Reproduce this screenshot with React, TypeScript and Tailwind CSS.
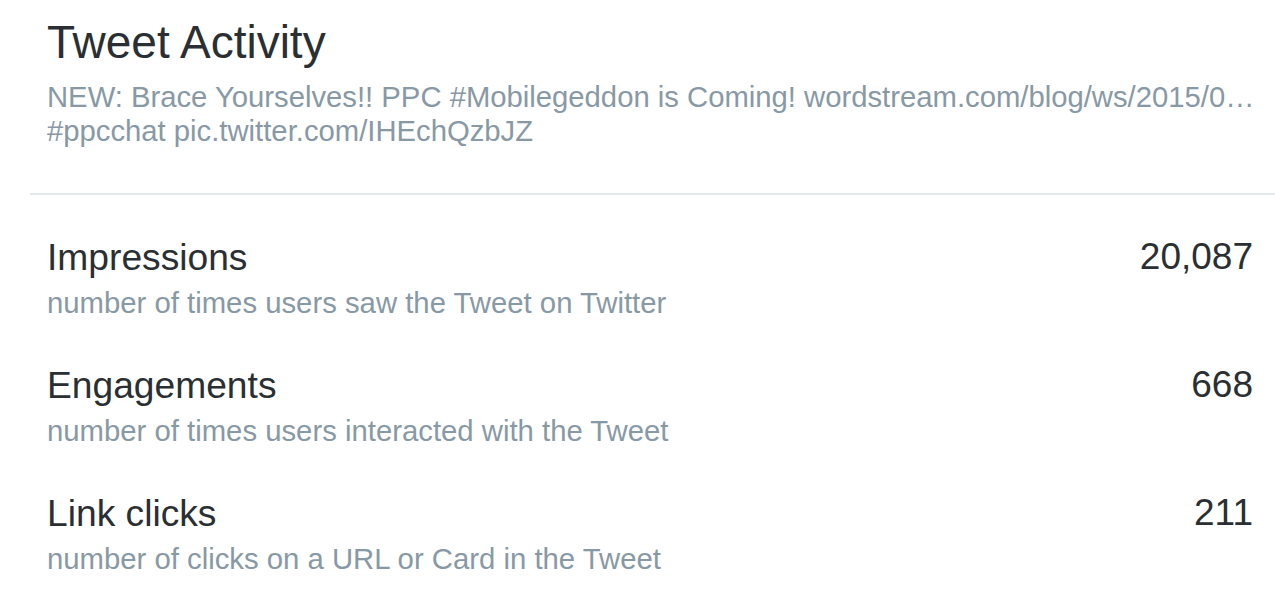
import React from "react";

const rows = [
  { label: "Impressions", desc: "number of times users saw the Tweet on Twitter", value: "20,087" },
  { label: "Engagements", desc: "number of times users interacted with the Tweet", value: "668" },
  { label: "Link clicks", desc: "number of clicks on a URL or Card in the Tweet", value: "211" },
];

export default function App() {
  return (
    <div
      className="w-[1275px] h-[608px] bg-white overflow-hidden pl-[30px]"
      style={{ fontFamily: '"Liberation Sans", Arial, sans-serif' }}
    >
      <div className="pl-[17px] pt-[16px] pb-[45px]">
        <h1 className="text-[46px] leading-[52px] text-[#292f33] font-normal">Tweet Activity</h1>
        <p className="mt-[12px] text-[29.25px] leading-[34px] text-[#8899a6]">
          <span className="block whitespace-nowrap">
            NEW: Brace Yourselves!! PPC #Mobilegeddon is Coming! wordstream.com/blog/ws/2015/0…
          </span>
          <span className="block whitespace-nowrap">#ppcchat pic.twitter.com/IHEchQzbJZ</span>
        </p>
      </div>
      <div className="h-[2px] bg-[#e1e8ed]" />
      <div className="pl-[17px] pr-[22px] pt-[40px] flex flex-col gap-[42px]">
        {rows.map((r) => (
          <div key={r.label} className="flex justify-between items-start">
            <div>
              <div className="text-[37.2px] leading-[44px] text-[#292f33]">{r.label}</div>
              <div className="mt-[6px] text-[29.3px] leading-[36px] text-[#8899a6]">{r.desc}</div>
            </div>
            <div className="text-[37px] leading-[44px] text-[#292f33]">{r.value}</div>
          </div>
        ))}
      </div>
    </div>
  );
}
